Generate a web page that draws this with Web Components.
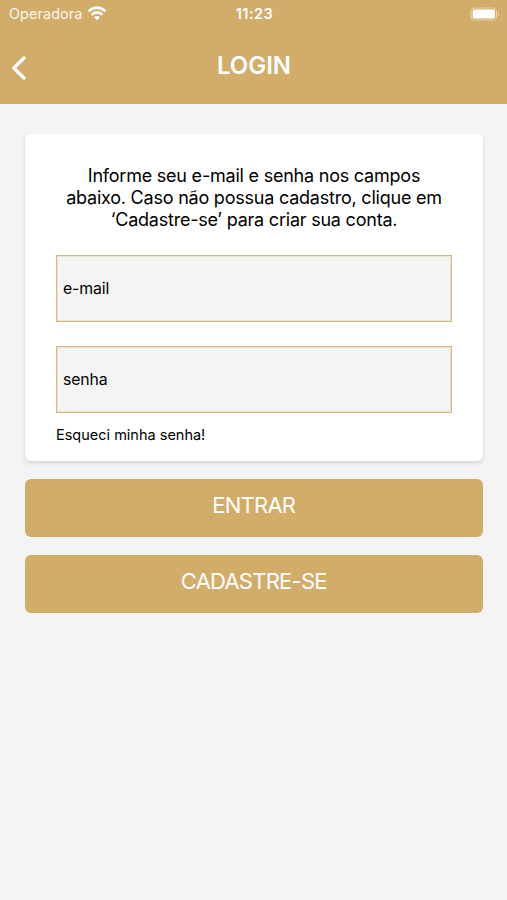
<!DOCTYPE html>
<html lang="pt-BR"><head><meta charset="utf-8"><title>Login</title>
<style>html,body{margin:0;height:100%;background:#f4f4f4;font-family:Inter,"Liberation Sans",sans-serif}</style></head>
<body><login-screen></login-screen>
<script>
const define=(name,html)=>customElements.define(name,class extends HTMLElement{
  constructor(){super();this.attachShadow({mode:"open"}).innerHTML=html;}
});
define("status-bar",`<style>
:host{display:grid;grid-template-columns:1fr auto 1fr;align-items:center;height:27px;padding:0 7px 0 9px;color:#fff;font-size:14px}
.l{display:flex;align-items:center;gap:4px}.l span{font-size:14.3px;letter-spacing:.15px;opacity:.88}.t{font-weight:600;font-size:14.5px;letter-spacing:.5px}.r{justify-self:end;display:flex}
svg{display:block}
</style><div class="l"><span>Operadora</span><svg width="20" height="15" viewBox="0 0 20 15" fill="none" stroke="#fff" stroke-width="2.5"><path d="M1.5 5.3Q10-2 18.5 5.3M4.6 8.8Q10 4 15.4 8.8"/><path d="M7 11.2Q10 8.8 13 11.2L10 14.2Z" fill="#fff" stroke="none"/></svg></div>
<span class="t">11:23</span><div class="r"><svg width="30" height="14" viewBox="0 0 30 14"><rect x="1" y="1" width="25.5" height="12" rx="3.8" fill="none" stroke="#fff" stroke-width="1.2" stroke-opacity=".45"/><rect x="2.7" y="2.5" width="22.2" height="9" rx="1.8" fill="#fff"/><path d="M28 5Q30 7 28 9Z" fill="#fff" opacity=".55"/></svg></div>`);
define("nav-header",`<style>
:host{display:grid;grid-template-columns:40px 1fr 40px;height:76px;color:#fff}
svg{margin:29px 0 0 11px;display:block}h1{margin:24px 0 0 1px;text-align:center;font-size:24px;line-height:29px;font-weight:600}
</style><svg width="16" height="24" viewBox="0 0 16 24" fill="none" stroke="#fff" stroke-width="3.3" stroke-linecap="round" stroke-linejoin="round"><path d="M13 2L2.8 12L13 22"/></svg><h1><slot></slot></h1>`);
define("text-field",`<style>
:host{display:flex;align-items:center;box-sizing:border-box;height:67px;padding-left:6px;border:1px solid #d8b97c;box-shadow:inset 0 0 0 1px #d2ad6940;background:#f4f4f4;font-size:15.8px;letter-spacing:-.1px;color:#000}
</style><slot></slot>`);
define("action-button",`<style>
:host{display:block;box-sizing:border-box;height:58px;margin-top:18px;padding-top:12px;border-radius:6px;background:#d2ad69;color:#fff;text-align:center;font-size:22px;line-height:28px;letter-spacing:-.75px}
</style><slot></slot>`);
define("login-card",`<style>
:host{display:block;box-sizing:border-box;height:327px;padding:31px 30.5px 0 31px;background:#fff;border-radius:6px;box-shadow:0 2px 4px #0002;color:#000}
p{margin:0 0 24px;text-align:center;font-size:18px;line-height:22px;letter-spacing:-.22px;white-space:nowrap}
text-field+text-field{margin-top:24px}.f{margin-top:12px;font-size:14.5px;line-height:20px}
</style><p>Informe seu e-mail e senha nos campos<br>abaixo. Caso não possua cadastro, clique em<br>‘Cadastre-se’ para criar sua conta.</p>
<text-field>e-mail</text-field><text-field>senha</text-field><div class="f">Esqueci minha senha!</div>`);
define("login-screen",`<style>
:host{display:block}header{background:#d2ad69;height:103.5px}main{padding:30.5px 24.5px 0 25px}
</style><header><status-bar></status-bar><nav-header>LOGIN</nav-header></header>
<main><login-card></login-card><action-button>ENTRAR</action-button><action-button>CADASTRE-SE</action-button></main>`);
</script></body></html>
